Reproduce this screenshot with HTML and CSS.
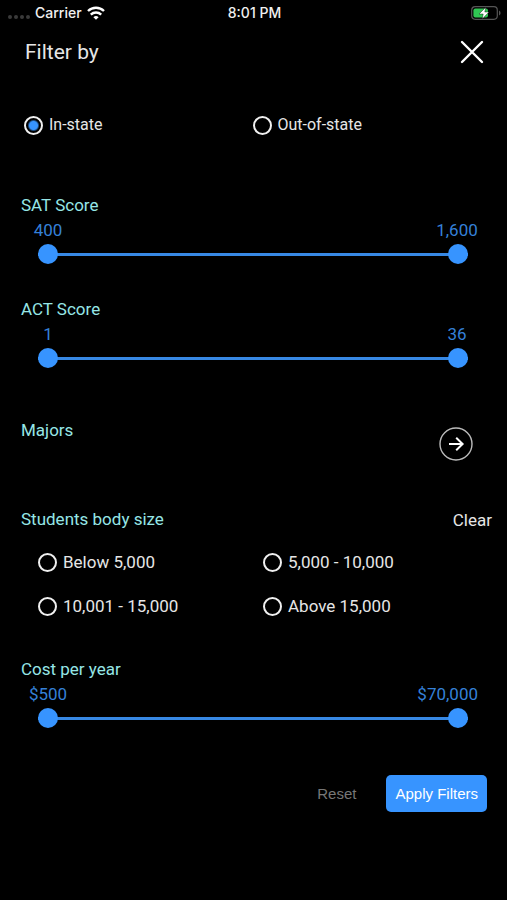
FILE: index.html
```html
<!DOCTYPE html>
<html lang="en">
<head>
    <meta charset="utf-8">
    <meta name="viewport" content="width=device-width, initial-scale=1">
    <title>Filter by</title>
    <link rel="stylesheet" href="styles.css">
</head>
<body>
    <div class="status-bar">
        <div class="status-left">
            <span class="signal"><i></i><i></i><i></i><i></i></span>
            <span>Carrier</span>
            <svg class="wifi" viewBox="0 0 18 14" width="18" height="14">
                <path d="M1 5 A11.5 11.5 0 0 1 17 5" />
                <path d="M3.8 8.6 A7.5 7.5 0 0 1 14.2 8.6" />
                <path class="dot" d="M9 13.8 L6.4 11.2 A4 4 0 0 1 11.6 11.2 Z" />
            </svg>
        </div>
        <span>8:01 PM</span>
        <div class="status-right">
            <svg viewBox="0 0 30 14" width="30" height="14">
                <rect x="0.7" y="0.7" width="25.6" height="12.6" rx="3.5" fill="none" stroke="#555" stroke-width="1.2" />
                <path d="M28 4.6 Q29.6 5.4 29.6 7 Q29.6 8.6 28 9.4 Z" fill="#555" />
                <rect x="2.4" y="2.4" width="14.6" height="9.2" rx="2" fill="#30c653" />
                <path d="M14.8 1.2 L8 8 H12.2 L11.2 13 L18 6 H13.8 Z" fill="#fff" stroke="#000" stroke-width="0.4" />
            </svg>
        </div>
    </div>

    <form class="filters">
        <header class="header">
            <h1>Filter by</h1>
            <button type="button" class="close" aria-label="Close">
                <svg viewBox="0 0 24 24" width="24" height="24">
                    <path d="M2 2 L22 22 M22 2 L2 22" />
                </svg>
            </button>
        </header>

        <div class="options residency">
            <label><input type="radio" name="residency" checked>In-state</label>
            <label><input type="radio" name="residency">Out-of-state</label>
        </div>

        <section class="range sat">
            <h2>SAT Score</h2>
            <div class="values"><output>400</output><output>1,600</output></div>
            <div class="slider">
                <input type="range" min="400" max="1600" value="400" aria-label="Minimum SAT score">
                <input type="range" min="400" max="1600" value="1600" aria-label="Maximum SAT score">
            </div>
        </section>

        <section class="range act">
            <h2>ACT Score</h2>
            <div class="values"><output>1</output><output>36</output></div>
            <div class="slider">
                <input type="range" min="1" max="36" value="1" aria-label="Minimum ACT score">
                <input type="range" min="1" max="36" value="36" aria-label="Maximum ACT score">
            </div>
        </section>

        <section class="majors">
            <h2>Majors</h2>
            <button type="button" class="arrow" aria-label="Choose majors">
                <svg viewBox="0 0 34 34" width="34" height="34">
                    <circle cx="17" cy="17" r="16" />
                    <path d="M10 17 H23.4 M17.2 10.8 L23.6 17 L17.2 23.2" />
                </svg>
            </button>
        </section>

        <section class="size">
            <div class="size-head">
                <h2>Students body size</h2>
                <button type="button" class="clear">Clear</button>
            </div>
            <div class="options sizes">
                <label><input type="radio" name="size">Below 5,000</label>
                <label><input type="radio" name="size">5,000 - 10,000</label>
                <label><input type="radio" name="size">10,001 - 15,000</label>
                <label><input type="radio" name="size">Above 15,000</label>
            </div>
        </section>

        <section class="range cost">
            <h2>Cost per year</h2>
            <div class="values"><output>$500</output><output>$70,000</output></div>
            <div class="slider">
                <input type="range" min="500" max="70000" value="500" aria-label="Minimum cost per year">
                <input type="range" min="500" max="70000" value="70000" aria-label="Maximum cost per year">
            </div>
        </section>

        <div class="actions">
            <button type="reset" class="reset">Reset</button>
            <button type="submit" class="apply">Apply Filters</button>
        </div>
    </form>
</body>
</html>
```

FILE: styles.css
```css
* {
    box-sizing: border-box;
}
body {
    margin: 0;
    background-color: #000;
    color: #e6e6e6;
    font-family: Roboto, sans-serif;
    font-size: 17px;
    line-height: 24px;
}
h1, h2 {
    margin: 0;
    font-weight: 400;
}
h2 {
    color: #96e6e6;
    font-size: 17px;
    line-height: 22px;
}
button {
    padding: 0;
    border: none;
    background: none;
    color: inherit;
    font: inherit;
    cursor: pointer;
}
svg {
    display: block;
}

/* status bar */
.status-bar {
    display: grid;
    grid-template-columns: 1fr auto 1fr;
    align-items: center;
    height: 26px;
    padding: 0 6px 0 8px;
    color: #f0f0f0;
    font-family: Inter, sans-serif;
    font-size: 14px;
    font-weight: 500;
}
.status-left {
    display: flex;
    align-items: center;
    gap: 5px;
}
.signal {
    display: flex;
    gap: 2px;
    padding-top: 8px;
}
.signal i {
    width: 4px;
    height: 4px;
    border-radius: 50%;
    background-color: #3a3a3a;
}
.wifi {
    fill: none;
    stroke: #fff;
    stroke-width: 2.4;
}
.wifi .dot {
    fill: #fff;
    stroke: none;
}
.status-right {
    justify-self: end;
}

/* header */
.header {
    display: flex;
    justify-content: space-between;
    align-items: center;
    height: 52px;
    padding: 0 23px 0 25px;
}
h1 {
    font-size: 21px;
}
.close path {
    fill: none;
    stroke: #fff;
    stroke-width: 2.4;
    stroke-linecap: round;
}

/* radio groups */
.options {
    display: grid;
    grid-template-columns: 1fr 1fr;
    row-gap: 24px;
}
.options label {
    display: flex;
    align-items: center;
    gap: 6px;
    height: 20px;
    cursor: pointer;
}
.options input {
    appearance: none;
    width: 19px;
    height: 19px;
    margin: 0;
    border: 2px solid #f0f0f0;
    border-radius: 50%;
}
.options input:checked {
    background: radial-gradient(circle, #3794ff 4px, transparent 6px);
}
.residency {
    padding: 0 26px 0 24px;
    margin-top: 37px;
    font-size: 16px;
}
.sizes {
    padding: 0 19px 0 38px;
    margin-top: 20px;
}

/* range sliders */
.range h2, .majors h2, .size h2 {
    padding-left: 21px;
}
.values {
    display: flex;
    justify-content: space-between;
    padding: 0 29px 0 27px;
    color: #3580d8;
    line-height: 28px;
}
.values output {
    min-width: 42px;
    text-align: center;
}
.slider {
    display: grid;
    height: 20px;
    margin: 0 39px 0 38px;
    background: linear-gradient(#3788e4, #3788e4) center / 100% 3px no-repeat;
}
.slider input {
    appearance: none;
    grid-area: 1 / 1;
    width: 100%;
    height: 20px;
    margin: 0;
    background: none;
    pointer-events: none;
}
.slider input::-webkit-slider-thumb {
    appearance: none;
    width: 20px;
    height: 20px;
    border: none;
    border-radius: 50%;
    background-color: #3794ff;
    pointer-events: auto;
}
.sat {
    margin-top: 59px;
}
.act {
    margin-top: 34px;
}
.cost {
    margin-top: 42px;
}

/* majors and body size */
.majors {
    display: flex;
    justify-content: space-between;
    margin-top: 51px;
    padding-right: 34px;
}
.arrow {
    margin-top: 8px;
}
.arrow svg {
    fill: none;
    stroke: #fff;
    stroke-width: 2;
}
.arrow circle {
    stroke: #bbb;
    stroke-width: 1.4;
}
.size {
    margin-top: 47px;
}
.size-head {
    display: flex;
    justify-content: space-between;
    padding-right: 15px;
}

/* buttons */
.actions {
    display: flex;
    justify-content: flex-end;
    gap: 30px;
    margin-top: 47px;
    padding-right: 20px;
    font-family: "Liberation Sans", Arial, sans-serif;
    font-size: 15px;
}
.reset {
    color: #777;
}
.apply {
    height: 37px;
    padding: 0 9px;
    border-radius: 5px;
    background-color: #3794ff;
    color: #fff;
}
```
